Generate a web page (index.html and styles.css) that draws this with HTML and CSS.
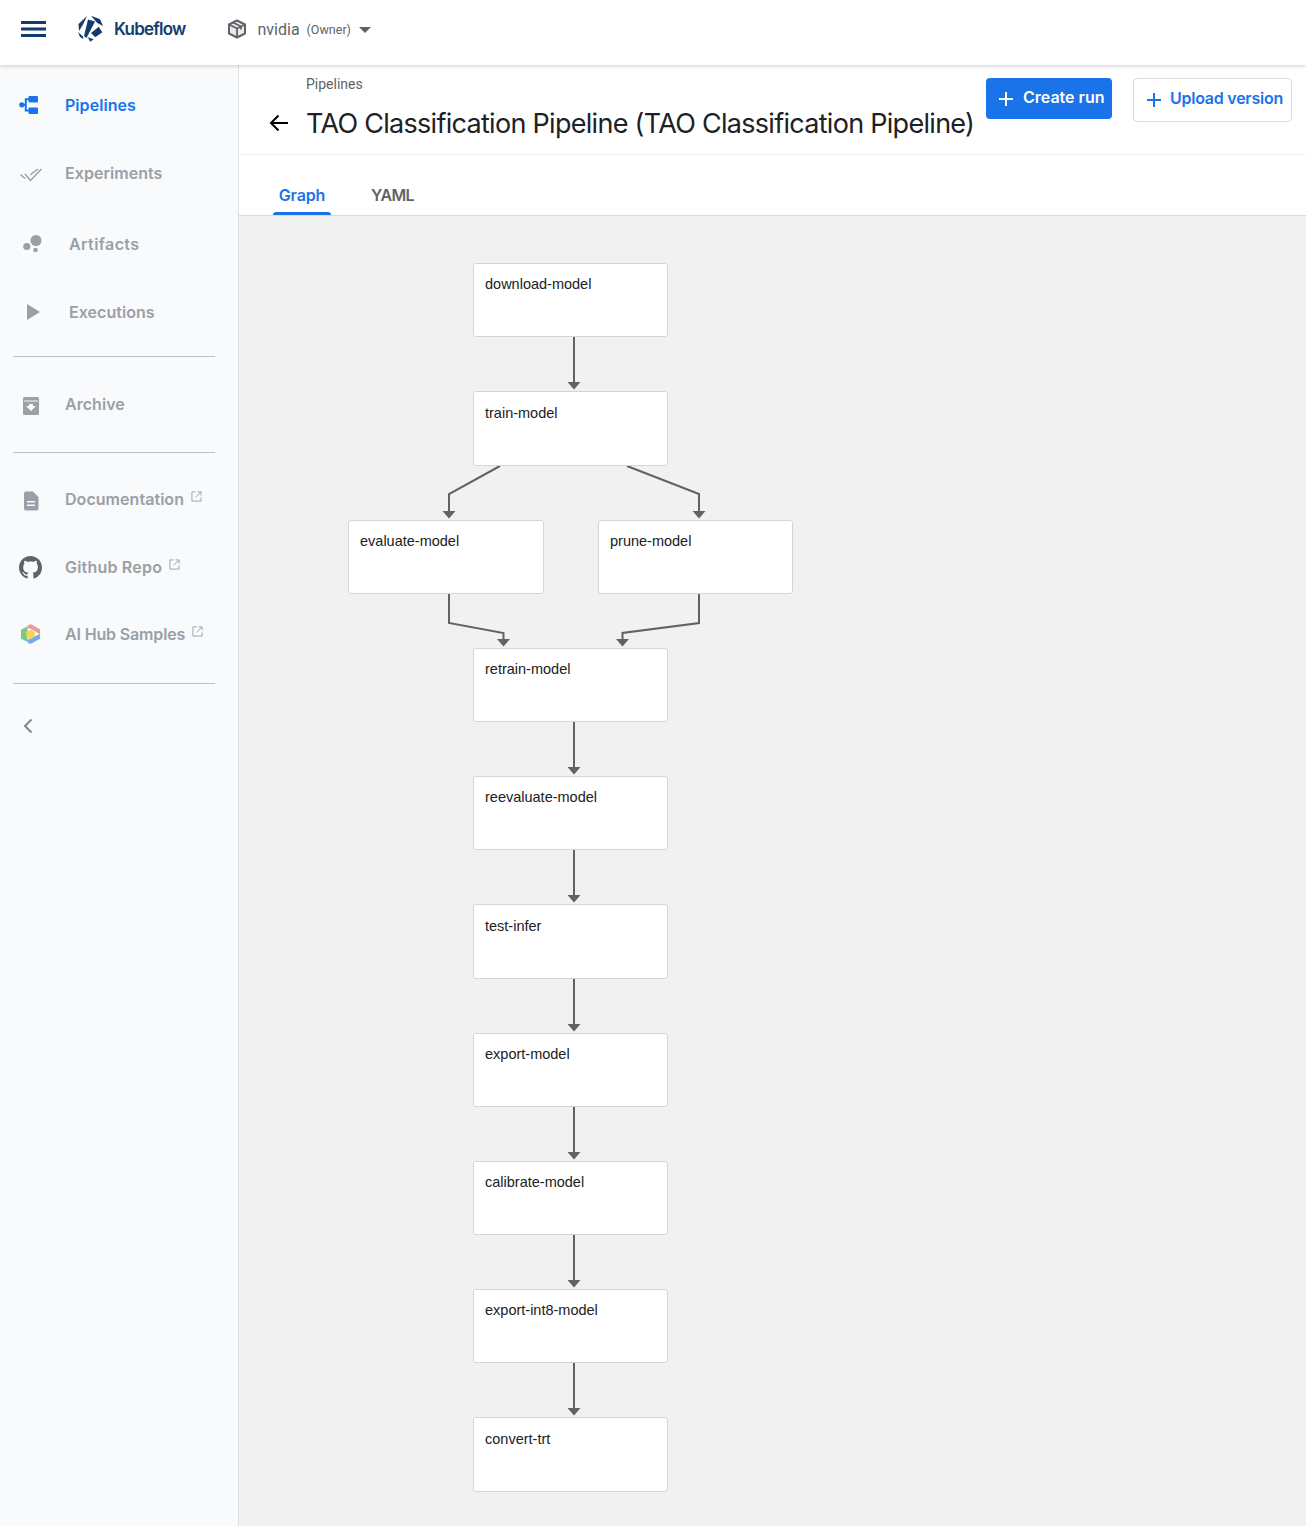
FILE: index.html
```html
<!DOCTYPE html>
<html lang="en">
<head>
    <meta charset="UTF-8">
    <meta name="viewport" content="width=device-width, initial-scale=1.0">
    <title>Kubeflow Pipelines</title>
    <link rel="stylesheet" href="styles.css">
</head>
<body>
    <header class="topbar">
        <svg class="menu-icon" viewBox="0 0 25 16"><path d="M0 1.500h25M0 8h25M0 14.500h25"/></svg>
        <div class="brand">
            <svg class="brand-logo" viewBox="0 0 26 27">
                <path d="M1.500 9 10 1 6 9.500 2 16z"/>
                <path d="M11 4.500 18 6.500 9.500 23 7 21z"/>
                <path d="M14 .7 23 4.300 26 11 20 7.700z"/>
                <path d="M14 18l7.700-6.300 3.600 5.600-7 5z"/>
                <path d="M10.700 22.300l6 2-3.400 2.400z"/>
                <path d="M1 17l5 4.500.5 2.500L3 22z"/>
            </svg>
            <span class="brand-name">Kubeflow</span>
        </div>
        <div class="namespace">
            <svg class="box-icon" viewBox="0 0 20 20">
                <path class="box-body" d="M10 1.500 18 5.500v9l-8 4-8-4v-9z"/>
                <path class="box-lines" d="M2 5.500l8 4 8-4M10 9.500v9M6 3.500l8 4v3"/>
            </svg>
            <span class="namespace-name">nvidia</span>
            <span class="namespace-role">(Owner)</span>
            <span class="caret"></span>
        </div>
    </header>

    <div class="layout">
        <nav class="sidebar">
            <a class="nav-item active">
                <svg class="nav-icon icon-pipelines" viewBox="0 0 20 18">
                    <circle cx="2.800" cy="8.800" r="2.600"/>
                    <path d="M10.500 0h7.500a1 1 0 0 1 1 1v4.500a1 1 0 0 1-1 1h-7.500a1 1 0 0 1-1-1V4.200H7.800v9.300h1.700v-1a1 1 0 0 1 1-1h7.500a1 1 0 0 1 1 1V17a1 1 0 0 1-1 1h-7.500a1 1 0 0 1-1-1v-1.500H5.800V9.800H4V7.800h1.800V2.200h3.700V1a1 1 0 0 1 1-1z"/>
                </svg>
                <span>Pipelines</span>
            </a>
            <a class="nav-item">
                <svg class="nav-icon icon-experiments" viewBox="0 0 22 14"><path d="M.5 6.500l4.500 4M5 6l5.500 6.500L21.500 1M10.500 7l2-2L18 1"/></svg>
                <span>Experiments</span>
            </a>
            <a class="nav-item inset gap-before">
                <svg class="nav-icon" viewBox="0 0 20 20"><circle cx="13" cy="6.500" r="5.500"/><circle cx="3.800" cy="12.500" r="3.600"/><circle cx="12.500" cy="16" r="2.300"/></svg>
                <span class="wider">Artifacts</span>
            </a>
            <a class="nav-item inset">
                <svg class="nav-icon" viewBox="0 0 20 20"><path d="M4 2 17 10 4 18z"/></svg>
                <span>Executions</span>
            </a>
            <div class="divider divider-first"></div>
            <a class="nav-item">
                <svg class="nav-icon low" viewBox="0 0 20 20"><path d="M3.500 1h13A1.500 1.500 0 0 1 18 2.500v15a1.500 1.500 0 0 1-1.500 1.500h-13A1.500 1.500 0 0 1 2 17.500v-15A1.500 1.500 0 0 1 3.500 1zM3 4.500v1h14v-1zM10 15l5-5h-3V8H8v2H5z" fill-rule="evenodd"/></svg>
                <span>Archive</span>
            </a>
            <div class="divider divider-second"></div>
            <a class="nav-item">
                <svg class="nav-icon low" viewBox="0 0 20 20"><path d="M5 .5h7l5.500 5.500V17.500a2 2 0 0 1-2 2H5a2 2 0 0 1-2-2v-15a2 2 0 0 1 2-2zM6 10v1.600h8V10zM6 13.500v1.600h8v-1.600z" fill-rule="evenodd"/></svg>
                <span>Documentation</span>
                <svg class="ext-icon" viewBox="0 0 12 12"><path d="M5 1H1v10h10V7M7 1h4v4M11 1 5 7"/></svg>
            </a>
            <a class="nav-item short">
                <svg class="nav-icon github" viewBox="0 0 16 16"><path d="M8 0C3.580 0 0 3.580 0 8c0 3.540 2.290 6.530 5.470 7.590.4.070.55-.17.55-.38 0-.19-.01-.82-.01-1.490-2.010.37-2.530-.49-2.690-.94-.09-.23-.48-.94-.82-1.130-.28-.15-.68-.52-.01-.53.63-.01 1.080.58 1.230.82.720 1.210 1.870.87 2.330.66.070-.52.280-.87.510-1.070-1.780-.2-3.640-.89-3.640-3.950 0-.87.310-1.590.820-2.150-.08-.2-.36-1.020.08-2.120 0 0 .67-.21 2.200.82.640-.18 1.320-.27 2-.27s1.360.09 2 .27c1.530-1.040 2.200-.82 2.200-.82.440 1.100.16 1.920.08 2.120.51.560.82 1.270.82 2.150 0 3.070-1.870 3.750-3.650 3.950.29.250.54.730.54 1.480 0 1.070-.01 1.930-.01 2.200 0 .21.150.460.550.380A8.010 8.010 0 0 0 16 8c0-4.420-3.580-8-8-8z"/></svg>
                <span class="slightly-wider">Github Repo</span>
                <svg class="ext-icon" viewBox="0 0 12 12"><path d="M5 1H1v10h10V7M7 1h4v4M11 1 5 7"/></svg>
            </a>
            <a class="nav-item">
                <svg class="nav-icon hub" viewBox="0 0 22 22">
                    <path fill="#7cc68a" d="M1 6.500 8 3v16.500L1 16z"/>
                    <path fill="#ee9a94" d="M8 2l3-1.500L21 6v5.500L14 7 8 4.500z"/>
                    <path fill="#7aa9ee" d="M21 11v5l-10 5.500L8 20v-3l7-3.500z"/>
                    <path fill="#f4d35e" d="M11 6.500l4.500 2.300v5L11 16.200 6.500 13.800v-5z"/>
                </svg>
                <span class="narrower">AI Hub Samples</span>
                <svg class="ext-icon" viewBox="0 0 12 12"><path d="M5 1H1v10h10V7M7 1h4v4M11 1 5 7"/></svg>
            </a>
            <div class="divider divider-third"></div>
            <svg class="collapse-icon" viewBox="0 0 10 16"><path d="M8.500 1.500 2 8l6.500 6.500"/></svg>
        </nav>

        <main class="content">
            <div class="toolbar">
                <div class="page-title">
                    <div class="breadcrumb">Pipelines</div>
                    <div class="title-row">
                        <svg class="back-icon" viewBox="0 0 20 20"><path d="M19 10H2M9.500 2.500 2 10l7.500 7.500"/></svg>
                        <h1>TAO Classification Pipeline (TAO Classification Pipeline)</h1>
                    </div>
                </div>
                <div class="actions">
                    <button class="btn btn-primary"><svg class="plus" viewBox="0 0 14 14"><path d="M7 0v14M0 7h14"/></svg>Create run</button>
                    <button class="btn btn-outline"><svg class="plus" viewBox="0 0 14 14"><path d="M7 0v14M0 7h14"/></svg>Upload version</button>
                </div>
            </div>
            <div class="tabs">
                <div class="tab active">Graph</div>
                <div class="tab">YAML</div>
            </div>
            <div class="canvas">
                <svg class="edges" viewBox="239 216 1067 1310">
                    <defs>
                        <marker id="arrow" markerUnits="userSpaceOnUse" markerWidth="14" markerHeight="8" refX="7" refY="0" orient="0" viewBox="0 0 14 8">
                            <path d="M0.500 0h13L7 7.500z" fill="#5f6368"/>
                        </marker>
                    </defs>
                </svg>
                <div class="node n-download">download-model</div>
                <div class="node n-train">train-model</div>
                <div class="node n-evaluate">evaluate-model</div>
                <div class="node n-prune">prune-model</div>
                <div class="node n-retrain">retrain-model</div>
                <div class="node n-reevaluate">reevaluate-model</div>
                <div class="node n-test">test-infer</div>
                <div class="node n-export">export-model</div>
                <div class="node n-calibrate">calibrate-model</div>
                <div class="node n-int8">export-int8-model</div>
                <div class="node n-convert">convert-trt</div>
            </div>
        </main>
    </div>

    <script>
        // edges are in page coordinates, same as the svg viewBox
        const edges = [
            '574,337 574,382',
            '500,466 449,494 449,511',
            '627,466 699,494 699,511',
            '449,594 449,623 503.500,633 503.500,639',
            '699,594 699,623 622.500,633 622.500,639',
            '574,722 574,767',
            '574,850 574,895',
            '574,979 574,1024',
            '574,1107 574,1152',
            '574,1235 574,1280',
            '574,1363 574,1408'
        ];
        const svg = document.querySelector('.edges');
        edges.forEach(points => {
            const line = document.createElementNS('http://www.w3.org/2000/svg', 'polyline');
            line.setAttribute('points', points);
            line.setAttribute('marker-end', 'url(#arrow)');
            svg.appendChild(line);
        });
    </script>
</body>
</html>
```

FILE: styles.css
```css
body {
    margin: 0;
    font-family: Inter, "Liberation Sans", sans-serif;
    background: #fff;
    height: 1526px;
    overflow: hidden;
}
.topbar {
    height: 65px;
    box-sizing: border-box;
    padding-bottom: 8px;
    display: flex;
    align-items: center;
    background: #fff;
    box-shadow: 0 1px 4px rgba(0, 0, 0, 0.2);
    position: relative;
    z-index: 2;
}
.menu-icon {
    width: 25px;
    height: 16px;
    margin-left: 21px;
    fill: none;
    stroke: #123c6e;
    stroke-width: 3;
}
.brand {
    display: flex;
    align-items: center;
    margin-left: 31px;
}
.brand-logo {
    width: 26px;
    height: 27px;
    fill: #123c6e;
}
.brand-name {
    margin-left: 11px;
    font-size: 17px;
    font-weight: 600;
    letter-spacing: -0.8px;
    color: #123c6e;
}
.namespace {
    display: flex;
    align-items: center;
    margin-top: 2px;
    margin-left: 42px;
    color: #5f6368;
}
.box-icon {
    width: 20px;
    height: 20px;
    margin-top: -2px;
}
.box-body {
    fill: #e8eaed;
    stroke: #5f6368;
    stroke-width: 2;
    stroke-linejoin: round;
}
.box-lines {
    fill: none;
    stroke: #5f6368;
    stroke-width: 1.800;
}
.namespace-name {
    margin-left: 10px;
    font-family: Roboto, sans-serif;
    font-size: 16px;
}
.namespace-role {
    margin-left: 7px;
    font-family: Roboto, sans-serif;
    font-size: 12.500px;
}
.caret {
    margin-left: 8px;
    border-left: 6px solid transparent;
    border-right: 6px solid transparent;
    border-top: 6px solid #5f6368;
}
.layout {
    display: flex;
    height: 1461px;
}
.sidebar {
    width: 238px;
    flex-shrink: 0;
    padding-top: 6px;
    background: #f8fafc;
    border-right: 1px solid #dfe1e5;
}
.nav-item {
    display: flex;
    align-items: center;
    height: 68px;
    padding-left: 65px;
    position: relative;
    font-size: 16px;
    font-weight: 600;
    letter-spacing: 0.05px;
    color: #9aa0a6;
}
.nav-item.active {
    color: #1a73e8;
}
.nav-item.inset {
    padding-left: 69px;
}
.nav-item.short {
    height: 67px;
}
.wider {
    letter-spacing: 0.4px;
}
.slightly-wider {
    letter-spacing: 0.2px;
}
.narrower {
    letter-spacing: -0.15px;
}
.gap-before {
    margin-top: 3px;
}
.nav-icon {
    position: absolute;
    left: 21px;
    top: 24px;
    width: 20px;
    height: 20px;
    fill: #9aa0a6;
}
.nav-icon.low {
    top: 26px;
}
.inset .nav-icon {
    left: 23px;
}
.active .nav-icon {
    fill: #1a73e8;
}
.icon-pipelines {
    left: 19px;
    top: 25px;
    height: 18px;
}
.nav-icon.icon-experiments {
    left: 20px;
    top: 29px;
    width: 22px;
    height: 14px;
    fill: none;
    stroke: #9aa0a6;
    stroke-width: 1.500;
}
.nav-icon.github {
    left: 19px;
    top: 23px;
    width: 23px;
    height: 23px;
    fill: #5f6368;
}
.nav-icon.hub {
    left: 20px;
    top: 23px;
    width: 21px;
    height: 22px;
}
.ext-icon {
    width: 11px;
    height: 11px;
    margin-left: 7px;
    margin-top: -5px;
    fill: none;
    stroke: #9aa0a6;
    stroke-width: 1;
}
.divider {
    height: 1px;
    margin-left: 13px;
    width: 202px;
    background: #bdc1c6;
}
.divider-first {
    margin-top: 10px;
    margin-bottom: 13px;
}
.divider-second {
    margin-top: 14px;
    margin-bottom: 12px;
}
.divider-third {
    margin-top: 15px;
}
.collapse-icon {
    display: block;
    width: 10px;
    height: 16px;
    margin: 34px 0 0 23px;
    fill: none;
    stroke: #80868b;
    stroke-width: 2;
}
.content {
    flex: 1;
    display: flex;
    flex-direction: column;
    min-width: 0;
}
.toolbar {
    height: 90px;
    box-sizing: border-box;
    display: flex;
    border-bottom: 1px solid #eceff1;
}
.page-title {
    width: 747px;
}
.breadcrumb {
    margin: 11px 0 0 67px;
    font-family: Roboto, sans-serif;
    font-size: 14px;
    line-height: 16px;
    color: #5f6368;
}
.title-row {
    display: flex;
    align-items: center;
    margin-top: 9px;
    height: 44px;
}
.back-icon {
    width: 20px;
    height: 20px;
    margin-left: 30px;
    fill: none;
    stroke: #000;
    stroke-width: 2;
}
h1 {
    margin: 0 0 0 17px;
    font-size: 27px;
    font-weight: 400;
    letter-spacing: -0.71px;
    white-space: nowrap;
    color: #202124;
}
.actions {
    display: flex;
    align-items: flex-start;
    margin-top: 13px;
}
.btn {
    display: flex;
    align-items: center;
    font-family: Inter, sans-serif;
    font-size: 16px;
    font-weight: 600;
    letter-spacing: -0.25px;
    border-radius: 4px;
    white-space: nowrap;
}
.plus {
    width: 14px;
    height: 14px;
    margin-top: 4px;
    margin-right: 9px;
    fill: none;
    stroke-width: 2;
}
.btn-primary {
    width: 126px;
    height: 41px;
    padding: 0 0 4px 13px;
    border: none;
    letter-spacing: 0;
    color: #fff;
    background: #1a73e8;
}
.btn-primary .plus {
    margin-right: 10px;
    stroke: #fff;
}
.btn-outline {
    width: 159px;
    height: 44px;
    margin-left: 21px;
    padding: 0 0 4px 13px;
    color: #1a73e8;
    background: #fff;
    border: 1px solid #dadce0;
}
.btn-outline .plus {
    stroke: #1a73e8;
}
.tabs {
    height: 61px;
    box-sizing: border-box;
    display: flex;
    padding-left: 34px;
    border-bottom: 1px solid #dadce0;
}
.tab {
    height: 60px;
    padding-top: 30px;
    box-sizing: border-box;
    font-size: 16px;
    font-weight: 600;
    letter-spacing: -0.7px;
    text-align: center;
    color: #5f6368;
    margin-left: 40px;
    position: relative;
}
.tab.active {
    width: 58px;
    margin-left: 0;
    letter-spacing: -0.1px;
    color: #1a73e8;
}
.tab.active::after {
    content: "";
    position: absolute;
    left: 0;
    right: 0;
    bottom: 0;
    height: 3px;
    background: #1a73e8;
    border-radius: 3px 3px 0 0;
}
.canvas {
    flex: 1;
    position: relative;
    background: #f1f1f1;
}
.edges {
    position: absolute;
    left: 0;
    top: 0;
    width: 1067px;
    height: 1310px;
}
.edges polyline {
    fill: none;
    stroke: #5f6368;
    stroke-width: 2;
}
.node {
    position: absolute;
    box-sizing: border-box;
    width: 195px;
    height: 74px;
    padding: 12px 11px;
    font-family: "Liberation Sans", Arial, sans-serif;
    font-size: 14.500px;
    line-height: 16px;
    color: #202124;
    background: #fff;
    border: 1px solid #d5d5d5;
    border-radius: 3px;
}
.n-download { left: 234px; top: 47px; }
.n-train { left: 234px; top: 175px; height: 75px; padding-top: 13px; }
.n-evaluate { left: 109px; top: 304px; width: 196px; }
.n-prune { left: 359px; top: 304px; }
.n-retrain { left: 234px; top: 432px; }
.n-reevaluate { left: 234px; top: 560px; }
.n-test { left: 234px; top: 688px; height: 75px; padding-top: 13px; }
.n-export { left: 234px; top: 817px; }
.n-calibrate { left: 234px; top: 945px; }
.n-int8 { left: 234px; top: 1073px; }
.n-convert { left: 234px; top: 1201px; height: 75px; padding-top: 13px; }
```
